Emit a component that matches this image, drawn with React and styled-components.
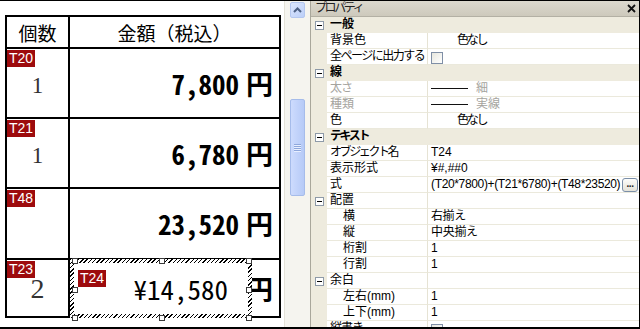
import React from "react";
import styled, { createGlobalStyle } from "styled-components";

const GlobalStyle = createGlobalStyle`
  html, body { margin:0; padding:0; background:#fff; }
  body { width:640px; height:329px; overflow:hidden; }
`;

const Frame = styled.div`
  display:flex;
  width:640px;
  height:329px;
  box-sizing:border-box;
  border-top:1px solid #000;
  border-right:1px solid #000;
  border-bottom:2px solid #000;
  overflow:hidden;
  background:#fff;
`;

/* ---------- report canvas ---------- */

const Canvas = styled.div`
  width:284px;
  flex:none;
  box-sizing:border-box;
  padding:14px 0 0 5px;
  background:#fff;
`;

const Table = styled.div`
  width:276px;
  box-sizing:border-box;
  display:grid;
  grid-template-columns:61px 209px;
  grid-template-rows:30px 68px 68px 69px 56px;
  gap:2px;
  padding:2px;
  background:#000;
`;

const Cell = styled.div`
  position:relative;
  background:#fff;
  display:flex;
  align-items:center;
  justify-content:${p => p.$justify || "center"};
  padding-right:${p => p.$pr || 0}px;
`;

const HeadText = styled.span`
  font-family:"Noto Sans CJK JP", sans-serif;
  font-size:19px;
  color:#000;
`;

const Count = styled.span`
  font-family:"Liberation Serif", serif;
  font-size:${p => p.$size}px;
  color:#333;
  padding-top:${p => p.$shift || 0}px;
`;

const Amount = styled.span`
  font-family:"Noto Sans CJK JP", sans-serif;
  font-feature-settings:"hwid";
  font-weight:${p => (p.$bold ? 700 : 400)};
  font-size:27px;
  line-height:1;
  color:#000;
`;

const Yen = styled(Amount)`
  margin-left:7px;
`;

const Tag = styled.span`
  position:absolute;
  left:${p => p.$x || 0}px;
  top:${p => p.$y || 1}px;
  height:17px;
  padding:0 2px;
  background:#9d0b0d;
  color:#fff;
  font-family:"Liberation Sans", sans-serif;
  font-size:14px;
  line-height:17px;
`;

const Selection = styled.div`
  position:absolute;
  left:0;
  top:-1px;
  width:182px;
  height:59px;
  box-sizing:border-box;
  padding:4px;
  background:repeating-linear-gradient(135deg, #000 0 1px, #fff 1px 3px);
`;

const SelectionInner = styled.div`
  height:100%;
  background:#fff;
  display:flex;
  align-items:center;
  justify-content:flex-end;
  padding-right:20px;
`;

const Handle = styled.span`
  position:absolute;
  left:${p => p.$x}px;
  top:${p => p.$y}px;
  width:6px;
  height:6px;
  box-sizing:border-box;
  background:#fff;
  border:1px solid #3a3a3a;
`;

/* ---------- scrollbar ---------- */

const ScrollTrack = styled.div`
  width:26px;
  flex:none;
  box-sizing:border-box;
  border-left:1px solid #e4e2d8;
  padding:1px 0 0 5px;
  background:#f5f4ef;
  display:flex;
  flex-direction:column;
`;

const ArrowButton = styled.div`
  width:15px;
  height:16px;
  box-sizing:border-box;
  border:1px solid #b4c7ef;
  border-radius:2px;
  background:linear-gradient(135deg, #dbe6fe, #bccff8);
  display:flex;
  align-items:center;
  justify-content:center;
`;

const Thumb = styled.div`
  width:15px;
  height:97px;
  margin-top:81px;
  box-sizing:border-box;
  border:1px solid #a6bcea;
  border-radius:2px;
  background:linear-gradient(90deg, #cddbfd, #b6caf7);
  display:flex;
  flex-direction:column;
  align-items:center;
  justify-content:center;
  gap:1px;
`;

const Grip = styled.span`
  width:7px;
  height:1px;
  background:#8ea7dc;
  box-shadow:0 1px 0 #e8efff;
`;

/* ---------- property panel ---------- */

const Panel = styled.div`
  flex:1;
  display:flex;
  flex-direction:column;
  border-left:1px solid #a9a79b;
  background:#fff;
  font-family:"Liberation Sans", "Noto Sans CJK JP", sans-serif;
  font-size:12px;
  color:#000;
`;

const TitleBar = styled.div`
  height:15px;
  flex:none;
  border-bottom:1px solid #b3b0a4;
  background:linear-gradient(#dcd9ce, #cdc9bc);
  display:flex;
  align-items:center;
  justify-content:space-between;
  padding:0 3px 0 4px;
  line-height:15px;
  color:#222;
`;

const TitleText = styled.span`
  letter-spacing:-2.4px;
`;

const Row = styled.div`
  height:16px;
  flex:none;
  display:grid;
  grid-template-columns:16px 101px 1fr;
  line-height:15px;
`;

const Gutter = styled.div`
  background:#eeebde;
  display:flex;
  align-items:center;
  padding-left:4px;
`;

const ExpandBox = styled.span`
  width:9px;
  height:9px;
  box-sizing:border-box;
  border:1px solid #8e9aa8;
  background:#fff;
  display:flex;
  align-items:center;
  justify-content:center;
  &::after {
    content:"";
    width:5px;
    height:1px;
    background:#000;
  }
`;

const CatLabel = styled.div`
  grid-column:2 / 4;
  background:#eeebde;
  font-weight:700;
  padding-left:3px;
  letter-spacing:${p => p.$ls || 0}px;
`;

const Name = styled.div`
  border-right:1px solid #e6e3d4;
  border-bottom:1px solid #ebe9dc;
  padding-left:${p => (p.$indent ? 16 : 3)}px;
  color:${p => (p.$dim ? "#a5a49e" : "#000")};
  letter-spacing:${p => p.$ls || 0}px;
  white-space:nowrap;
  overflow:hidden;
`;

const Value = styled.div`
  border-bottom:1px solid #ebe9dc;
  padding-left:${p => p.$pl || 3}px;
  padding-right:1px;
  display:flex;
  align-items:center;
  justify-content:space-between;
  color:${p => (p.$dim ? "#a5a49e" : "#000")};
  letter-spacing:${p => p.$ls || 0}px;
  white-space:nowrap;
  overflow:hidden;
`;

const LineSample = styled.span`
  display:flex;
  align-items:center;
  gap:8px;
  &::before {
    content:"";
    width:37px;
    height:1px;
    background:#111;
  }
`;

const Formula = styled.span`
  letter-spacing:-0.35px;
`;

const Check = styled.span`
  width:12px;
  height:12px;
  box-sizing:border-box;
  border:1px solid #7f8fa6;
  background:linear-gradient(135deg, #e6e6de, #fff);
  margin-top:2px;
`;

const DotsButton = styled.span`
  width:16px;
  height:14px;
  box-sizing:border-box;
  border:1px solid #7a8ea8;
  border-radius:3px;
  background:linear-gradient(#fdfdfb, #e4e2d8);
  font-weight:700;
  font-size:10px;
  line-height:9px;
  text-align:center;
  color:#222;
  letter-spacing:-0.5px;
`;

const amounts = [
  { tag: "T20", count: "1", size: 23, shift: 5, value: "7,800" },
  { tag: "T21", count: "1", size: 23, shift: 5, value: "6,780" },
  { tag: "T48", count: "", size: 23, value: "23,520" },
];

const handles = [
  [2, -1], [89, -1], [176, -1],
  [2, 28], [176, 28],
  [2, 56], [89, 56], [176, 56],
];

const props = [
  { cat: "一般" },
  { name: "背景色", kind: "none", text: "色なし", vls: -2.2 },
  { name: "全ページに出力する", ls: -1.5, kind: "check" },
  { cat: "線" },
  { name: "太さ", ls: -1, dim: true, kind: "line", text: "細" },
  { name: "種類", dim: true, kind: "line", text: "実線" },
  { name: "色", kind: "none", text: "色なし", vls: -2.2 },
  { cat: "テキスト", ls: -2.4 },
  { name: "オブジェクト名", ls: -2.4, kind: "text", text: "T24" },
  { name: "表示形式", kind: "text", text: "¥#,##0" },
  { name: "式", kind: "formula", text: "(T20*7800)+(T21*6780)+(T48*23520)" },
  { name: "配置", expand: true },
  { name: "横", indent: true, kind: "text", text: "右揃え", vls: -0.4 },
  { name: "縦", indent: true, kind: "text", text: "中央揃え", vls: -0.3 },
  { name: "桁割", indent: true, kind: "text", text: "1" },
  { name: "行割", indent: true, kind: "text", text: "1" },
  { name: "余白", expand: true },
  { name: "左右(mm)", indent: true, kind: "text", text: "1" },
  { name: "上下(mm)", indent: true, kind: "text", text: "1" },
  { name: "縦書き", ls: -1, kind: "check" },
];

function PropValue({ p }) {
  if (p.kind === "none") return <Value $pl={29} $ls={p.vls}>{p.text}</Value>;
  if (p.kind === "check") return <Value><Check /></Value>;
  if (p.kind === "line") return <Value $dim><LineSample>{p.text}</LineSample></Value>;
  if (p.kind === "formula")
    return (
      <Value>
        <Formula>{p.text}</Formula>
        <DotsButton>...</DotsButton>
      </Value>
    );
  return <Value $ls={p.vls}>{p.text}</Value>;
}

function PropRow({ p }) {
  if (p.cat)
    return (
      <Row>
        <Gutter><ExpandBox /></Gutter>
        <CatLabel $ls={p.ls}>{p.cat}</CatLabel>
      </Row>
    );
  return (
    <Row>
      <Gutter>{p.expand && <ExpandBox />}</Gutter>
      <Name $indent={p.indent} $dim={p.dim} $ls={p.ls}>{p.name}</Name>
      {p.kind ? <PropValue p={p} /> : <Value />}
    </Row>
  );
}

export default function App() {
  return (
    <>
      <GlobalStyle />
      <Frame>
        <Canvas>
          <Table>
            <Cell><HeadText>個数</HeadText></Cell>
            <Cell><HeadText>金額（税込）</HeadText></Cell>

            {amounts.map(a => (
              <React.Fragment key={a.tag}>
                <Cell>
                  <Tag>{a.tag}</Tag>
                  {a.count && <Count $size={a.size} $shift={a.shift}>{a.count}</Count>}
                </Cell>
                <Cell $justify="flex-end" $pr={6}>
                  <Amount $bold>{a.value}</Amount>
                  <Yen $bold>円</Yen>
                </Cell>
              </React.Fragment>
            ))}

            <Cell>
              <Tag $y={0}>T23</Tag>
              <Count $size={28} $shift={2}>2</Count>
            </Cell>
            <Cell $justify="flex-end" $pr={6}>
              <Yen $bold>円</Yen>
              <Selection>
                <SelectionInner>
                  <Amount>¥14,580</Amount>
                </SelectionInner>
                <Tag $x={8} $y={11}>T24</Tag>
                {handles.map(([x, y]) => (
                  <Handle key={`${x}-${y}`} $x={x} $y={y} />
                ))}
              </Selection>
            </Cell>
          </Table>
        </Canvas>

        <ScrollTrack>
          <ArrowButton>
            <svg width="9" height="6" viewBox="0 0 9 6">
              <polyline points="1,5 4.5,1.5 8,5" fill="none" stroke="#4d6185" strokeWidth="2" />
            </svg>
          </ArrowButton>
          <Thumb>
            <Grip />
            <Grip />
            <Grip />
            <Grip />
          </Thumb>
        </ScrollTrack>

        <Panel>
          <TitleBar>
            <TitleText>プロパティ</TitleText>
            <svg width="9" height="9" viewBox="0 0 9 9">
              <path d="M1 1 L8 8 M8 1 L1 8" stroke="#111" strokeWidth="1.8" />
            </svg>
          </TitleBar>
          {props.map((p, i) => (
            <PropRow key={i} p={p} />
          ))}
        </Panel>
      </Frame>
    </>
  );
}
